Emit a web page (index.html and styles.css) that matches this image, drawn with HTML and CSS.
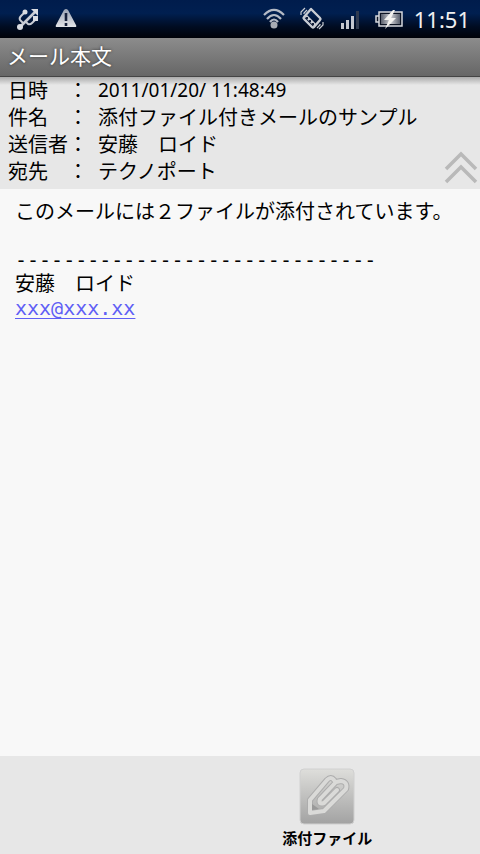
FILE: index.html
```html
<!DOCTYPE html>
<html lang="ja">
<head>
<meta charset="utf-8">
<meta name="viewport" content="width=device-width, initial-scale=1">
<title>メール本文</title>
<link rel="stylesheet" href="styles.css">
</head>
<body>
<div class="status">
  <svg class="icon" width="24" height="24" viewBox="0 0 24 24" aria-hidden="true">
    <g fill="none" stroke="#c8ccd4" stroke-width="2">
      <path d="M4 20L19 5" stroke-width="2.600"/>
      <path d="M7 16L4 13Q3 11 5 9L9 5"/>
      <path d="M10 15L12 17Q14 18 16 16L20 12"/>
    </g>
    <g fill="#d9dce2"><path d="M22 2V9L15 2Z"/><circle cx="4" cy="20" r="3"/><circle cx="9" cy="5" r="2.500"/><path d="M17 9h5v5h-5z"/></g>
  </svg>
  <svg class="icon icon-warning" width="24" height="24" viewBox="0 0 24 24" aria-hidden="true">
    <defs><linearGradient id="warn" x1="0" y1="0" x2="0" y2="1"><stop offset="0" stop-color="#9aa3b4"/><stop offset="1" stop-color="#e2e4e8"/></linearGradient></defs>
    <path d="M10 3Q12 1 14 3L22 18Q23 20 21 20H3Q1 20 2 18Z" fill="url(#warn)"/>
    <path d="M12 6v8M12 16v3" stroke="#16203a" stroke-width="2.600"/>
  </svg>
  <svg class="icon icon-first-right" width="24" height="24" viewBox="0 0 24 24" aria-hidden="true">
    <g fill="none" stroke="#b4bac5" stroke-width="2.200"><path d="M2 8Q12 -2 22 8"/><path d="M5 12Q12 4 19 12"/><path d="M8 15Q12 10 16 15"/></g>
    <circle cx="12" cy="18" r="3.500" fill="#a9adb5"/>
  </svg>
  <svg class="icon icon-vibrate" width="24" height="24" viewBox="0 0 24 24" aria-hidden="true">
    <g fill="none" stroke="#c9cdd4">
      <path d="M11 2L20 11Q21 12 20 13L14 20Q13 21 12 20L4 12Q3 11 4 10Z" stroke-width="2.400" stroke-linejoin="round"/>
      <path d="M6 9L15 18" stroke-width="3"/>
      <path d="M1 8V5L5 1M4 7V6L7 3M23 15V18L19 22M20 17V18L17 21" stroke-width="1.200"/>
    </g>
    <path d="M6 10h2v2h-2zM9 13h2v2h-2zM12 16h2v2h-2z" fill="#101c38"/>
  </svg>
  <svg class="icon icon-signal" width="24" height="24" viewBox="0 0 24 24" aria-hidden="true">
    <g fill="#c3c7cf"><path d="M3 16h3v6H3zM8 13h3v9H8zM13 9h3v13h-3z"/><path d="M18 4h3v18h-3z" fill="#303b50"/></g>
  </svg>
  <svg class="icon icon-battery" width="30" height="24" viewBox="0 0 30 24" aria-hidden="true">
    <defs><linearGradient id="cell"><stop offset="0" stop-color="#59606e"/><stop offset="0.500" stop-color="#d0d2d6"/><stop offset="1" stop-color="#59606e"/></linearGradient></defs>
    <path d="M5 5h23v14H5zM2 9h3v6H2z" fill="#0c1424" stroke="#d5d8dd" stroke-width="1.500"/>
    <path d="M7 7h19v10H7z" fill="url(#cell)"/>
    <path d="M19 3L10 13h5l-4 9L22 11h-5l4-8Z" fill="#f3f3f0"/>
  </svg>
  <time class="clock">11:51</time>
</div>
<header class="title"><h1>メール本文</h1></header>
<section class="meta">
  <dl class="fields">
    <dt>日時</dt><dd><time class="date">2011/01/20/ 11:48:49</time></dd>
    <dt>件名</dt><dd>添付ファイル付きメールのサンプル</dd>
    <dt>送信者</dt><dd>安藤　ロイド</dd>
    <dt>宛先</dt><dd>テクノポート</dd>
  </dl>
  <button class="collapse" type="button" aria-label="閉じる">
    <svg width="36" height="34" viewBox="0 0 36 34" aria-hidden="true"><path d="M3 18L18 3L33 18M3 31L18 16L33 31" fill="none" stroke="#b9b9b9" stroke-width="3.500"/></svg>
  </button>
</section>
<main class="body">
  <p>このメールには２ファイルが添付されています。</p>
  <p class="signature">------------------------------<br>安藤　ロイド<br><a href="mailto:xxx@xxx.xx">xxx@xxx.xx</a></p>
</main>
<footer class="toolbar">
  <button class="attach" type="button">
    <svg width="56" height="58" viewBox="0 0 56 58" aria-hidden="true">
      <defs><linearGradient id="tile" x1="0" y1="0" x2="0" y2="1"><stop offset="0" stop-color="#dededb"/><stop offset="1" stop-color="#a2a2a2"/></linearGradient></defs>
      <rect x="1" y="1" width="54" height="55" rx="4" fill="url(#tile)" stroke="#d0d0d0"/>
      <g fill="none" stroke-linejoin="round" stroke-linecap="round">
        <path d="M35 12Q32 8 28 12L11 32V45L25 43L47 21Q49 14 42 13L37 14L21 31Q19 37 25 35L38 22" stroke="#adadad" stroke-width="6"/>
        <path d="M35 12Q32 8 28 12L11 32V45L25 43L47 21Q49 14 42 13L37 14L21 31Q19 37 25 35L38 22" stroke="#dadad8" stroke-width="4"/>
        <path d="M13 36L20 41L13 42Z" fill="#999"/>
      </g>
    </svg>
    <span>添付ファイル</span>
  </button>
</footer>
</body>
</html>
```
FILE: styles.css
```css
* { box-sizing: border-box; }
body {
  margin: 0;
  min-height: 100vh;
  display: flex;
  flex-direction: column;
  background: #f8f8f8;
  color: #000;
  font: 20px/24px "Noto Sans", "Noto Sans CJK JP", sans-serif;
}
button { border: 0; padding: 0; background: none; color: inherit; font: inherit; }
svg { display: block; }
h1, p, dl, dd { margin: 0; }
.status {
  display: flex;
  align-items: center;
  height: 38px;
  padding: 0 10px 0 16px;
  background: linear-gradient(#001c4c, #001f50 35%, #000c22 70%, #000208);
}
.icon { flex: none; }
.icon-warning { margin-left: 14px; }
.icon-first-right { margin-left: auto; }
.icon-vibrate { margin-left: 14px; }
.icon-signal { margin-left: 14px; }
.icon-battery { margin-left: 12px; }
.clock { margin-left: 10px; color: #f0f0f0; font-size: 22px; }
.title {
  height: 39px;
  padding: 3px 7px 0;
  background: linear-gradient(#8c8c8c, #666);
  border-bottom: 1px solid #444;
}
.title h1 { color: #fff; font-size: 21px; line-height: 30px; font-weight: 400; text-shadow: 0 0 3px #333; }
.meta {
  position: relative;
  padding: 0 8px 4px;
  background: linear-gradient(#aaa, #e7e7e7 8px);
}
.fields { display: grid; grid-template-columns: 60px 1fr; line-height: 27px; }
.fields dt { white-space: nowrap; }
.fields dd { display: flex; }
.fields dd::before { content: "："; width: 30px; }
.date { font-size: 19px; }
.collapse { position: absolute; right: 1px; bottom: 4px; }
.body { flex: 1; padding: 11px 15px; }
.signature { margin-top: 24px; font-family: "DejaVu Sans Mono", "Noto Sans CJK JP", monospace; }
.signature a { color: #5f5ff5; text-underline-offset: 3px; text-decoration-thickness: 1px; }
.toolbar {
  display: grid;
  grid-template-columns: 4fr 7fr;
  height: 98px;
  padding: 12px 0 0;
  background: #e7e7e7;
}
.attach {
  grid-column: 2;
  justify-self: center;
  display: flex;
  flex-direction: column;
  align-items: center;
  font-size: 15px;
  font-weight: 700;
}
```
